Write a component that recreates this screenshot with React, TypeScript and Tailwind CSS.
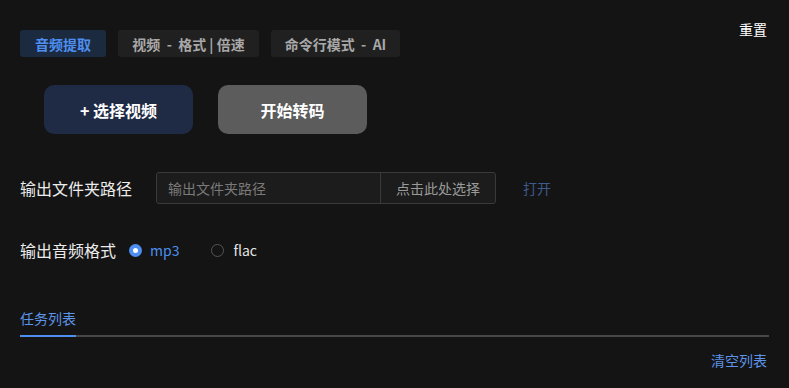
import React, { useState } from 'react';

const tabs = [
  { label: '音频提取', w: 'w-[86px]' },
  { label: '视频 - 格式 | 倍速', w: 'w-[141px]' },
  { label: '命令行模式 - AI', w: 'w-[129px]' },
];

export default function App() {
  const [tab, setTab] = useState(0);
  const [format, setFormat] = useState('mp3');

  return (
    <div
      className="w-[789px] h-[388px] bg-[#141414] text-[#e5e5e5] px-5 overflow-hidden"
      style={{ fontFamily: '"Noto Sans CJK SC", "Noto Sans", sans-serif' }}
    >
      {/* top tabs */}
      <div className="flex items-start justify-between pt-[30px]">
        <div className="flex gap-[12px]">
          {tabs.map((t, i) => (
            <button
              key={t.label}
              onClick={() => setTab(i)}
              className={
                i === tab
                  ? `${t.w} h-[27px] rounded-[3px] bg-[#1c2a3f] text-[#4d8ef0] text-[14px] font-bold leading-none whitespace-pre`
                  : `${t.w} h-[27px] rounded-[3px] bg-[#202020] text-[#a8a8a8] text-[14px] font-bold leading-none whitespace-pre`
              }
            >
              {t.label.replace(/ - /g, '  -  ')}
            </button>
          ))}
        </div>
        <button className="-mt-[8px] mr-[2px] text-[14px] text-white leading-none">重置</button>
      </div>

      {/* action buttons */}
      <div className="flex gap-[25px] pl-6 mt-[28px]">
        <button className="w-[149px] h-[49px] rounded-[10px] bg-[#1f2a44] text-white text-[16px] font-bold">
          + 选择视频
        </button>
        <button className="w-[149px] h-[49px] rounded-[10px] bg-[#5c5c5c] text-white text-[16px] font-bold">
          开始转码
        </button>
      </div>

      {/* output folder */}
      <div className="flex items-center mt-[38px] h-[32px]">
        <span className="w-[136px] text-[16px] text-[#ececec]">输出文件夹路径</span>
        <div className="flex h-[32px] w-[340px] border border-[#3a3a3a] rounded-[3px] bg-[#1c1c1c]">
          <input
            placeholder="输出文件夹路径"
            className="flex-1 min-w-0 bg-transparent px-[11px] text-[14px] text-[#ccc] placeholder:text-[#7a7a7a] outline-none"
          />
          <button className="w-[115px] border-l border-[#3a3a3a] text-[14px] text-[#9a9a9a]">
            点击此处选择
          </button>
        </div>
        <button className="ml-[27px] text-[14px] text-[#3d5a8c]">打开</button>
      </div>

      {/* audio format */}
      <div className="flex items-center mt-[32px] h-[28px]">
        <span className="text-[16px] text-[#ececec] mr-[13px]">输出音频格式</span>
        {['mp3', 'flac'].map((f) => (
          <label key={f} className="flex items-center mr-[32px] cursor-pointer" onClick={() => setFormat(f)}>
            <span
              className={
                format === f
                  ? 'w-[13px] h-[13px] rounded-full bg-[#4d8ef0] flex items-center justify-center'
                  : 'w-[13px] h-[13px] rounded-full border border-[#555]'
              }
            >
              {format === f && <span className="w-[5px] h-[5px] rounded-full bg-white" />}
            </span>
            <span className={format === f ? 'ml-[8px] text-[14px] text-[#4d8ef0]' : 'ml-[9px] text-[14px] text-[#e5e5e5]'}>
              {f}
            </span>
          </label>
        ))}
      </div>

      {/* task list */}
      <div className="mt-[47px]">
        <div className="text-[14px] text-[#5c93e6] leading-none pb-[10px]">任务列表</div>
        <div className="relative h-[2px] bg-[#474747]">
          <div className="absolute left-0 top-0 h-[2px] w-[56px] bg-[#4d8ef0]" />
        </div>
      </div>
      <div className="flex justify-end mt-[16px]">
        <button className="text-[14px] text-[#5c93e6] leading-none mr-[2px]">清空列表</button>
      </div>
    </div>
  );
}
